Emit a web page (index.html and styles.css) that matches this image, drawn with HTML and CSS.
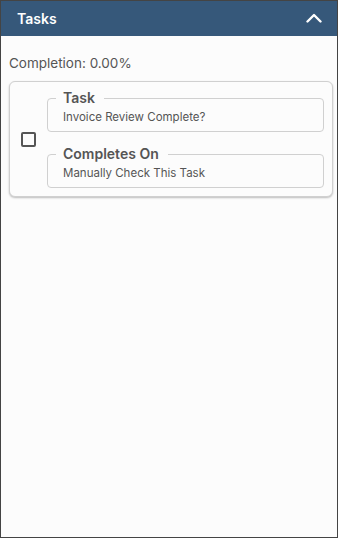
FILE: index.html
```html
<!DOCTYPE html>
<html>
<head>
<meta charset="utf-8">
<link rel="stylesheet" href="styles.css">
</head>
<body>
<div class="panel">
  <div class="header">
    <span class="title">Tasks</span>
    <svg class="chevron" width="16" height="10" viewBox="0 0 16 10"><path d="M1.5 8.5 L8 2 L14.5 8.5" fill="none" stroke="#fff" stroke-width="2.4" stroke-linecap="round" stroke-linejoin="round"/></svg>
  </div>
  <div class="content">
    <div class="completion">Completion: 0.00%</div>
    <div class="card">
      <div class="checkbox"></div>
      <div class="fields">
        <fieldset class="field">
          <legend>Task</legend>
          <div class="value">Invoice Review Complete?</div>
        </fieldset>
        <fieldset class="field">
          <legend>Completes On</legend>
          <div class="value">Manually Check This Task</div>
        </fieldset>
      </div>
    </div>
  </div>
</div>
</body>
</html>
```
FILE: styles.css
```css
* { box-sizing: border-box; }
html, body { margin: 0; padding: 0; }
body {
  width: 338px;
  height: 538px;
  font-family: Inter, "Noto Sans", sans-serif;
  background: #fcfcfc;
}
.panel {
  width: 338px;
  height: 538px;
  border: 1px solid #444;
  background: #fcfcfc;
  display: flex;
  flex-direction: column;
}
.header {
  height: 35px;
  background: #36587a;
  display: flex;
  align-items: center;
  justify-content: space-between;
  padding: 0 15px 0 16px;
}
.title {
  color: #fff;
  font-weight: 600;
  font-size: 14px;
}
.chevron { display: block; margin-top: -2px; }
.content {
  padding: 19px 4px 0 8px;
}
.completion {
  font-size: 13.5px;
  color: #555;
  line-height: 16px;
}
.card {
  margin-top: 10px;
  border: 1px solid #d0d0d0;
  border-radius: 6px;
  box-shadow: 0 1px 2px rgba(0,0,0,0.25);
  background: #fcfcfc;
  display: flex;
  align-items: center;
  padding: 8px 8px 8px 11px;
}
.checkbox {
  width: 15px;
  height: 15px;
  border: 2px solid #555;
  border-radius: 2px;
  flex: none;
  margin-right: 11px;
}
.fields {
  flex: 1;
  display: flex;
  flex-direction: column;
  gap: 14px;
}
.field {
  margin: 0;
  border: 1px solid #d0d0d0;
  border-radius: 4px;
  padding: 0 15px 7px 15px;
  min-width: 0;
}
.field legend {
  margin-left: -7px;
  padding: 0 9px 0 7px;
  font-size: 14px;
  font-weight: 600;
  color: #555;
  line-height: 16px;
}
.value {
  margin-top: 4px;
  font-size: 11.5px;
  color: #555;
  line-height: 14px;
}
```
